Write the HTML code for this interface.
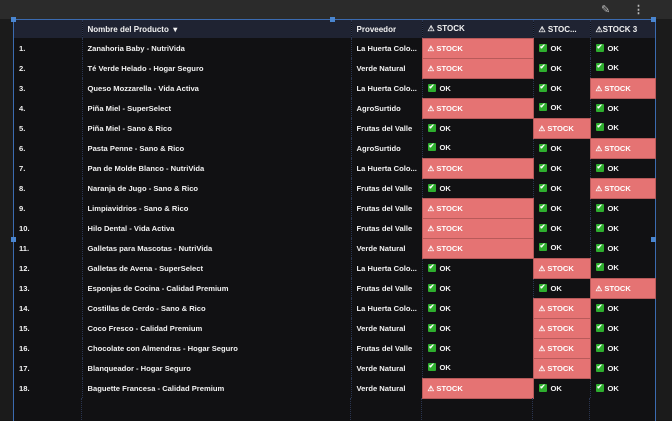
<!DOCTYPE html><html><head><meta charset="utf-8"><style>
body{margin:0;width:672px;height:420px;background:#161616;overflow:hidden;font-family:"Liberation Sans",sans-serif;position:relative}
.top{position:absolute;left:0;top:0;width:672px;height:19px;background:#2b2b2b}
.side{position:absolute;left:0;top:19px;width:13px;height:401px;background:#1b1b1b}
.rs{position:absolute;left:655px;top:19px;width:17px;height:401px;background:#1b1b1b}
.wrap{position:absolute;left:13px;top:19px;width:641px;height:401px;background:#111113;border-top:1px solid #3b6bb0;border-left:1px solid #3b6bb0;border-right:1px solid #3b6bb0}
table{border-collapse:collapse;table-layout:fixed;width:641px;font-size:7.6px;color:#f2f2f2}
td,th{height:20px;padding:0 0 0 5px;white-space:nowrap;overflow:hidden;text-overflow:ellipsis;border-left:1px dotted #2a3550;box-sizing:border-box;vertical-align:middle}
th{height:18px;background:#1f2332;font-weight:bold;text-align:left;font-size:8px}
td{font-weight:bold}
td:first-child,th:first-child{border-left:none}
.s{background:#e57373;border:1px solid #b85a5a;color:#fff;font-weight:bold}
.ok::before{content:"✔";display:inline-block;vertical-align:middle;width:8px;height:8px;background:#2eae2e;color:#fff;font-size:7px;line-height:8px;text-align:center;margin-right:4px;margin-top:-2px;border-radius:1px}
.h{position:absolute;width:5px;height:5px;background:#4a86d0}
.icon{position:absolute;top:3px;color:#bbb;font-size:11px}
.col{position:absolute;border-left:1px dotted #2a3550}
</style></head><body>
<div class="top"></div><div class="side"></div><div class="rs"></div>
<div class="icon" style="left:601px">✎</div><div class="icon" style="left:633px;font-weight:bold">⋮</div>
<div class="wrap"><table>
<colgroup><col style="width:68px"><col style="width:269px"><col style="width:71px"><col style="width:111px"><col style="width:57px"><col style="width:65px"></colgroup>
<tr><th></th><th>Nombre del Producto &nbsp;▾</th><th>Proveedor</th><th>⚠ STOCK</th><th>⚠ STOC...</th><th>⚠STOCK 3</th></tr>
<tr><td>1.</td><td>Zanahoria Baby - NutriVida</td><td>La Huerta Colo...</td><td class="s">⚠ STOCK</td><td class="ok">OK</td><td class="ok">OK</td></tr>
<tr><td>2.</td><td>Té Verde Helado - Hogar Seguro</td><td>Verde Natural</td><td class="s">⚠ STOCK</td><td class="ok">OK</td><td class="ok">OK</td></tr>
<tr><td>3.</td><td>Queso Mozzarella - Vida Activa</td><td>La Huerta Colo...</td><td class="ok">OK</td><td class="ok">OK</td><td class="s">⚠ STOCK</td></tr>
<tr><td>4.</td><td>Piña Miel - SuperSelect</td><td>AgroSurtido</td><td class="s">⚠ STOCK</td><td class="ok">OK</td><td class="ok">OK</td></tr>
<tr><td>5.</td><td>Piña Miel - Sano &amp; Rico</td><td>Frutas del Valle</td><td class="ok">OK</td><td class="s">⚠ STOCK</td><td class="ok">OK</td></tr>
<tr><td>6.</td><td>Pasta Penne - Sano &amp; Rico</td><td>AgroSurtido</td><td class="ok">OK</td><td class="ok">OK</td><td class="s">⚠ STOCK</td></tr>
<tr><td>7.</td><td>Pan de Molde Blanco - NutriVida</td><td>La Huerta Colo...</td><td class="s">⚠ STOCK</td><td class="ok">OK</td><td class="ok">OK</td></tr>
<tr><td>8.</td><td>Naranja de Jugo - Sano &amp; Rico</td><td>Frutas del Valle</td><td class="ok">OK</td><td class="ok">OK</td><td class="s">⚠ STOCK</td></tr>
<tr><td>9.</td><td>Limpiavidrios - Sano &amp; Rico</td><td>Frutas del Valle</td><td class="s">⚠ STOCK</td><td class="ok">OK</td><td class="ok">OK</td></tr>
<tr><td>10.</td><td>Hilo Dental - Vida Activa</td><td>Frutas del Valle</td><td class="s">⚠ STOCK</td><td class="ok">OK</td><td class="ok">OK</td></tr>
<tr><td>11.</td><td>Galletas para Mascotas - NutriVida</td><td>Verde Natural</td><td class="s">⚠ STOCK</td><td class="ok">OK</td><td class="ok">OK</td></tr>
<tr><td>12.</td><td>Galletas de Avena - SuperSelect</td><td>La Huerta Colo...</td><td class="ok">OK</td><td class="s">⚠ STOCK</td><td class="ok">OK</td></tr>
<tr><td>13.</td><td>Esponjas de Cocina - Calidad Premium</td><td>Frutas del Valle</td><td class="ok">OK</td><td class="ok">OK</td><td class="s">⚠ STOCK</td></tr>
<tr><td>14.</td><td>Costillas de Cerdo - Sano &amp; Rico</td><td>La Huerta Colo...</td><td class="ok">OK</td><td class="s">⚠ STOCK</td><td class="ok">OK</td></tr>
<tr><td>15.</td><td>Coco Fresco - Calidad Premium</td><td>Verde Natural</td><td class="ok">OK</td><td class="s">⚠ STOCK</td><td class="ok">OK</td></tr>
<tr><td>16.</td><td>Chocolate con Almendras - Hogar Seguro</td><td>Frutas del Valle</td><td class="ok">OK</td><td class="s">⚠ STOCK</td><td class="ok">OK</td></tr>
<tr><td>17.</td><td>Blanqueador - Hogar Seguro</td><td>Verde Natural</td><td class="ok">OK</td><td class="s">⚠ STOCK</td><td class="ok">OK</td></tr>
<tr><td>18.</td><td>Baguette Francesa - Calidad Premium</td><td>Verde Natural</td><td class="s">⚠ STOCK</td><td class="ok">OK</td><td class="ok">OK</td></tr>
</table></div>
<div class="col" style="left:81px;top:398px;height:22px"></div>
<div class="col" style="left:350px;top:398px;height:22px"></div>
<div class="col" style="left:421px;top:398px;height:22px"></div>
<div class="col" style="left:532px;top:398px;height:22px"></div>
<div class="col" style="left:589px;top:398px;height:22px"></div>
<div class="h" style="left:11px;top:17px"></div><div class="h" style="left:330px;top:17px"></div><div class="h" style="left:651px;top:17px"></div>
<div class="h" style="left:11px;top:237px"></div><div class="h" style="left:651px;top:237px"></div>
</body></html>
